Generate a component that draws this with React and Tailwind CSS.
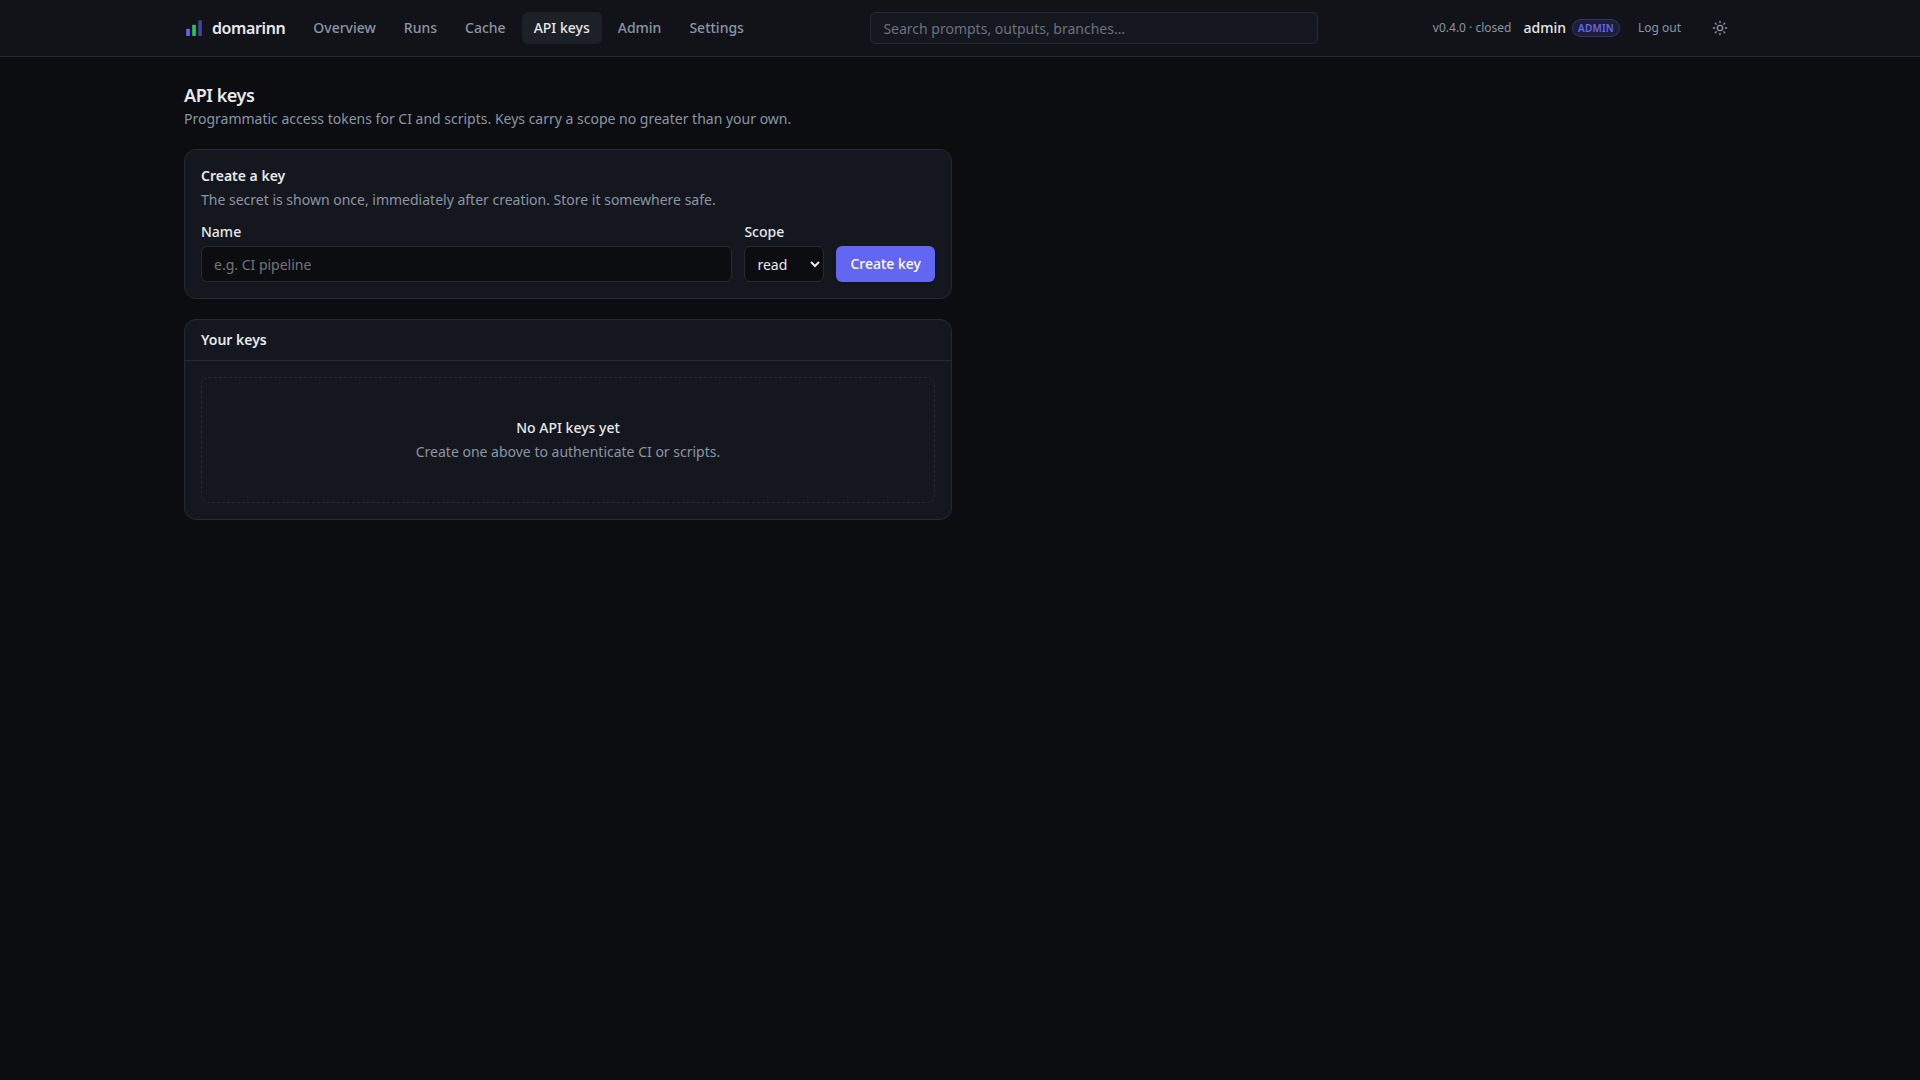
import React, { useState } from "react";
import { Sun } from "lucide-react";

const NAV_ITEMS = ["Overview", "Runs", "Cache", "API keys", "Admin", "Settings"];

function Logo() {
  return (
    <svg width="20" height="20" viewBox="0 0 20 20" aria-hidden="true">
      <rect x="2.2" y="10.8" width="3.7" height="7.2" rx="0.8" fill="#6366f1" />
      <rect x="8.2" y="6.7" width="3.7" height="11.3" rx="0.8" fill="#22c55e" />
      <rect x="14.2" y="2.3" width="3.7" height="15.7" rx="0.8" fill="#6366f1" opacity="0.6" />
    </svg>
  );
}

function Header() {
  return (
    <header className="border-b border-[#262a33] bg-[#111318]">
      <div className="mx-auto flex h-14 max-w-[1600px] items-center gap-4 px-6">
        <a href="#" className="flex items-center gap-2 font-semibold tracking-tight">
          <Logo />
          domarinn
        </a>
        <nav className="flex items-center gap-1">
          {NAV_ITEMS.map((item) => (
            <a
              key={item}
              href="#"
              className={`rounded-md px-3 py-1.5 text-sm font-medium ${
                item === "API keys" ? "bg-[#1c2127] text-[#e6e8eb]" : "text-[#8b95a5]"
              }`}
            >
              {item}
            </a>
          ))}
        </nav>
        <div className="flex flex-1 justify-center">
          <input
            type="search"
            placeholder="Search prompts, outputs, branches…"
            className="h-8 w-full max-w-md rounded-md border border-[#262a33] bg-[#14171e] px-3 text-sm placeholder:text-[#6b7280]"
          />
        </div>
        <div className="flex items-center gap-3">
          <span className="text-xs text-[#8b95a5]">v0.4.0 · closed</span>
          <div className="flex items-center gap-1.5 text-sm font-medium">
            admin
            <span className="rounded-full border border-[#6366f1]/30 bg-[#6366f1]/15 px-[5px] text-[10px] leading-4 font-semibold tracking-[0.02em] text-[#6366f1] uppercase">
              admin
            </span>
          </div>
          <button className="px-1.5 text-xs text-[#8b95a5]">Log out</button>
          <button className="ml-[5px] flex size-8 items-center justify-center rounded-md text-[#8b95a5]" aria-label="Toggle theme">
            <Sun size={16} />
          </button>
        </div>
      </div>
    </header>
  );
}

function CreateKeyCard() {
  const [name, setName] = useState("");
  const [scope, setScope] = useState("read");

  return (
    <section className="rounded-xl border border-[#262a33] bg-[#14171e] p-4">
      <h2 className="text-sm font-semibold">Create a key</h2>
      <p className="mt-1 text-sm text-[#8b95a5]">
        The secret is shown once, immediately after creation. Store it somewhere safe.
      </p>
      <form className="mt-3 flex items-end gap-3" onSubmit={(e) => e.preventDefault()}>
        <label className="flex flex-1 flex-col gap-1 text-sm font-medium">
          Name
          <input
            value={name}
            onChange={(e) => setName(e.target.value)}
            placeholder="e.g. CI pipeline"
            className="h-9 rounded-md border border-[#262a33] bg-[#0b0d10] px-3 text-sm font-normal placeholder:text-[#757575]"
          />
        </label>
        <label className="flex flex-col gap-1 text-sm font-medium">
          Scope
          <select
            value={scope}
            onChange={(e) => setScope(e.target.value)}
            className="h-9 rounded-md border border-[#262a33] bg-[#0b0d10] px-2 text-sm font-normal"
          >
            <option value="read">read</option>
            <option value="write">write</option>
            <option value="admin">admin</option>
          </select>
        </label>
        <button className="h-9 rounded-md bg-[#6366f1] px-3.5 text-sm font-medium text-white shadow-sm">
          Create key
        </button>
      </form>
    </section>
  );
}

function KeysCard() {
  return (
    <section className="rounded-xl border border-[#262a33] bg-[#14171e]">
      <div className="border-b border-[#262a33] px-4 py-2.5">
        <h2 className="text-sm font-semibold">Your keys</h2>
      </div>
      <div className="p-4">
        <div className="flex flex-col items-center gap-1 rounded-lg border border-dashed border-[#262a33] py-10 text-sm">
          <p className="font-medium">No API keys yet</p>
          <p className="text-[#8b95a5]">Create one above to authenticate CI or scripts.</p>
        </div>
      </div>
    </section>
  );
}

function App() {
  return (
    <div className="min-h-screen bg-[#0b0d10] font-['Noto_Sans',sans-serif] text-[#e6e8eb] scheme-dark">
      <Header />
      <main className="mx-auto max-w-[1600px] px-6 py-6">
        <div className="flex max-w-3xl flex-col gap-5">
          <div>
            <h1 className="text-lg font-semibold tracking-tight">API keys</h1>
            <p className="text-sm text-[#8b95a5]">
              Programmatic access tokens for CI and scripts. Keys carry a scope no greater than your own.
            </p>
          </div>
          <CreateKeyCard />
          <KeysCard />
        </div>
      </main>
    </div>
  );
}

export default App;
